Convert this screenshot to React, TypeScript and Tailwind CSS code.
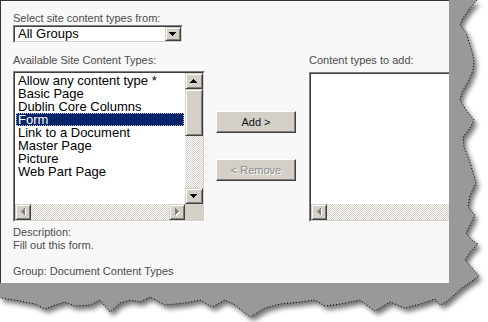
import React from 'react';

type Dir = 'up' | 'down' | 'left' | 'right';

function Arrow({ dir, disabled }: { dir: Dir; disabled?: boolean }) {
  const horiz = dir === 'left' || dir === 'right';
  const w = horiz ? 4 : 7;
  const h = horiz ? 7 : 4;
  const rects = [0, 1, 2, 3].map((i) => {
    const off = 3 - i;
    const len = 2 * i + 1;
    if (dir === 'up') return { x: off, y: i, w: len, h: 1 };
    if (dir === 'down') return { x: off, y: 3 - i, w: len, h: 1 };
    if (dir === 'left') return { x: i, y: off, w: 1, h: len };
    return { x: 3 - i, y: off, w: 1, h: len };
  });
  return (
    <svg width={w + 1} height={h + 1} shapeRendering="crispEdges" className="block">
      {disabled &&
        rects.map((r, k) => (
          <rect key={'s' + k} x={r.x + 1} y={r.y + 1} width={r.w} height={r.h} fill="#ffffff" />
        ))}
      {rects.map((r, k) => (
        <rect key={k} x={r.x} y={r.y} width={r.w} height={r.h} fill={disabled ? '#808080' : '#000000'} />
      ))}
    </svg>
  );
}

function ScrollBtn({ dir, disabled, className = '' }: { dir: Dir; disabled?: boolean; className?: string }) {
  return (
    <div
      className={`shrink-0 bg-[#d4d0c8] border border-t-[#d4d0c8] border-l-[#d4d0c8] border-r-[#404040] border-b-[#404040] shadow-[inset_1px_1px_0_#ffffff,inset_-1px_-1px_0_#808080] flex items-center justify-center ${className}`}
    >
      <Arrow dir={dir} disabled={disabled} />
    </div>
  );
}

const track =
  'bg-[repeating-conic-gradient(#d4d0c8_0_25%,#ffffff_0_50%)] bg-[length:2px_2px]';

function Sunken({ className = '', children }: { className?: string; children?: React.ReactNode }) {
  return (
    <div className={`border border-t-[#808080] border-l-[#808080] border-r-white border-b-white ${className}`}>
      <div className="w-full h-full border border-t-[#404040] border-l-[#404040] border-r-[#d4d0c8] border-b-[#d4d0c8] bg-white flex flex-col overflow-hidden">
        {children}
      </div>
    </div>
  );
}

function PushButton({ children, disabled, className = '' }: { children: React.ReactNode; disabled?: boolean; className?: string }) {
  return (
    <div
      className={`h-[22px] w-[80px] bg-[#d4d0c8] border border-t-white border-l-white border-r-[#404040] border-b-[#404040] shadow-[inset_-1px_-1px_0_#808080] flex items-center justify-center text-[11px] font-normal ${
        disabled ? 'text-[#8a8a8a] [text-shadow:1px_1px_0_#ffffff]' : 'text-[#111111]'
      } ${className}`}
    >
      {children}
    </div>
  );
}

const items = [
  'Allow any content type *',
  'Basic Page',
  'Dublin Core Columns',
  'Form',
  'Link to a Document',
  'Master Page',
  'Picture',
  'Web Part Page',
];

const rightEdge: [number, number][] = [
  [477, 0], [470, 8], [463, 18], [460, 25], [466, 32], [469, 42], [472, 52], [474, 60],
  [473, 70], [469, 80], [462, 92], [460, 100], [466, 110], [474, 120], [470, 128],
  [463, 137], [464, 147], [468, 157], [471, 166], [476, 183], [470, 195], [468, 207],
  [475, 215], [470, 225], [466, 233], [472, 240], [478, 244], [470, 252], [465, 260],
  [472, 268], [479, 276], [462, 288], [446, 302], [440, 305], [435, 299],
];
const bottomEdge: [number, number][] = [
  [420, 304], [405, 308], [390, 302], [375, 311], [360, 300], [340, 304], [325, 306],
  [315, 300], [300, 302], [280, 304], [265, 308], [250, 317], [235, 305], [225, 300],
  [212, 307], [200, 300], [185, 303], [165, 305], [150, 297], [140, 302], [130, 300],
  [120, 303], [110, 312], [100, 300], [90, 305], [75, 306], [65, 302], [55, 305],
  [45, 309], [35, 304], [15, 300], [0, 298],
];

function TornShadow() {
  const edge = [...rightEdge, ...bottomEdge];
  const edgeStr = edge.map((p) => p.join(',')).join(' ');
  const poly = `0,0 ${edgeStr}`;
  return (
    <svg className="absolute left-0 top-0" width={488} height={322}>
      <defs>
        <filter id="blur" x="-10%" y="-10%" width="120%" height="120%">
          <feGaussianBlur stdDeviation="2.5" />
        </filter>
      </defs>
      <polygon points={poly} fill="#000000" opacity="0.55" transform="translate(3,4)" filter="url(#blur)" />
      <polygon points={poly} fill="#999999" />
      <polyline points={edgeStr} fill="none" stroke="#000000" strokeWidth="1" strokeDasharray="1 2" />
    </svg>
  );
}

export default function App() {
  return (
    <div className="relative w-[488px] h-[322px] bg-white overflow-hidden font-['Liberation_Sans',Arial,sans-serif]">
      <TornShadow />
      <div className="relative w-[449px] h-[283px] bg-[#f8f8f8] border-t border-l border-[#333333] overflow-hidden pl-[12px] pt-[11px] text-[11px] leading-[13px] text-[#4c4c4c]">
        <div>Select site content types from:</div>
        <Sunken className="w-[170px] h-[18px]">
          <div className="flex h-full">
            <div className="flex-1 pl-[3px] text-[13px] leading-[14px] text-black">All Groups</div>
            <ScrollBtn dir="down" className="w-[16px] h-full" />
          </div>
        </Sunken>

        <div className="flex mt-[11px]">
          <div className="w-[192px] shrink-0">
            <div>Available Site Content Types:</div>
            <Sunken className="mt-[4px] w-[192px] h-[151px]">
              <div className="flex h-[131px]">
                <div className="flex-1 pt-[1px] text-[13px] leading-[13px] text-black">
                  {items.map((it) =>
                    it === 'Form' ? (
                      <div
                        key={it}
                        className="h-[13px] mx-[1px] pl-[2px] bg-[#0a246a] text-white outline-1 outline-dotted -outline-offset-1 outline-[#b8bcd0] whitespace-nowrap"
                      >
                        {it}
                      </div>
                    ) : (
                      <div key={it} className="h-[13px] mx-[1px] pl-[2px] whitespace-nowrap">
                        {it}
                      </div>
                    )
                  )}
                </div>
                <div className="w-[18px] flex flex-col">
                  <ScrollBtn dir="up" className="h-[16px]" />
                  <div className="h-[47px] bg-[#d4d0c8] border border-t-[#d4d0c8] border-l-[#d4d0c8] border-r-[#404040] border-b-[#404040] shadow-[inset_1px_1px_0_#ffffff,inset_-1px_-1px_0_#808080]" />
                  <div className={`flex-1 ${track}`} />
                  <ScrollBtn dir="down" className="h-[16px]" />
                </div>
              </div>
              <div className="flex h-[16px]">
                <ScrollBtn dir="left" disabled className="w-[16px]" />
                <div className={`flex-1 ${track}`} />
                <ScrollBtn dir="right" disabled className="w-[16px]" />
                <div className="w-[18px] bg-[#d4d0c8]" />
              </div>
            </Sunken>
          </div>

          <div className="ml-[11px] w-[80px] shrink-0 flex flex-col">
            <PushButton className="mt-[57px]">Add &gt;</PushButton>
            <PushButton disabled className="mt-[26px]">
              &lt; Remove
            </PushButton>
          </div>

          <div className="ml-[13px] shrink-0">
            <div className="whitespace-nowrap">Content types to add:</div>
            <Sunken className="mt-[5px] w-[160px] h-[150px]">
              <div className="flex-1" />
              <div className="flex h-[16px]">
                <ScrollBtn dir="left" disabled className="w-[16px]" />
                <div className={`flex-1 ${track}`} />
              </div>
            </Sunken>
          </div>
        </div>

        <div className="mt-[4px]">
          <div>Description:</div>
          <div>Fill out this form.</div>
          <div className="h-[13px]" />
          <div>Group: Document Content Types</div>
        </div>
      </div>
    </div>
  );
}
